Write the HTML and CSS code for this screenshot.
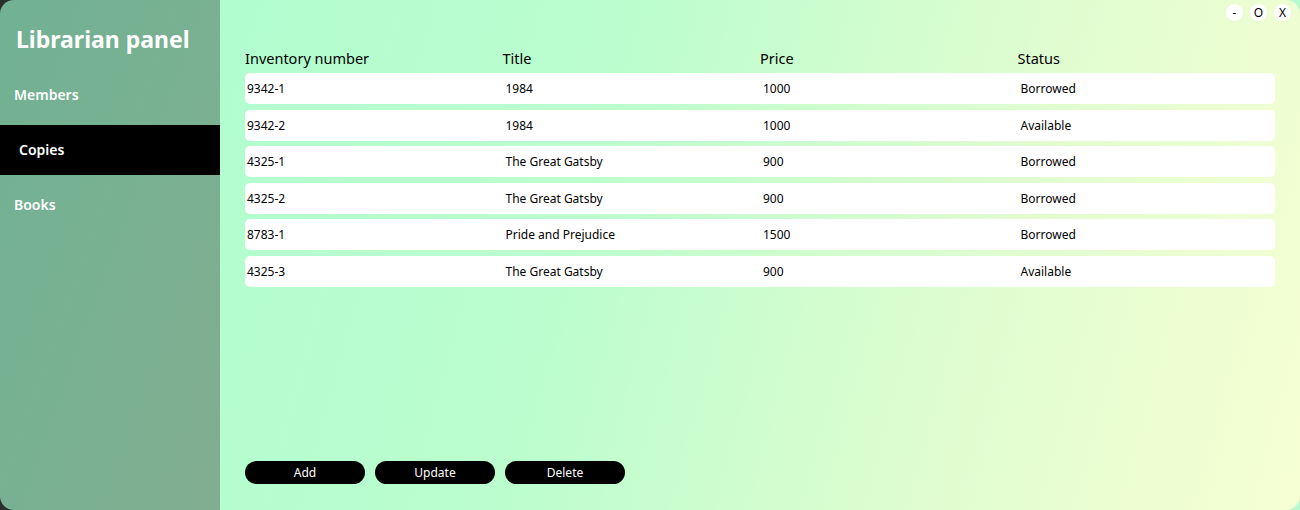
FILE: index.html
```html
<!DOCTYPE html>
<html>
<head>
<meta charset="utf-8">
<link rel="stylesheet" href="styles.css">
</head>
<body>
<div class="window">
  <aside class="sidebar">
    <h1 class="brand">Librarian panel</h1>
    <nav class="nav">
      <div class="nav-item">Members</div>
      <div class="nav-item active">Copies</div>
      <div class="nav-item">Books</div>
    </nav>
  </aside>
  <main class="main">
    <div class="win-controls">
      <span class="wc">-</span>
      <span class="wc">O</span>
      <span class="wc">X</span>
    </div>
    <div class="table">
      <div class="thead">
        <div>Inventory number</div><div>Title</div><div>Price</div><div>Status</div>
      </div>
      <div class="row"><div>9342-1</div><div>1984</div><div>1000</div><div>Borrowed</div></div>
      <div class="row"><div>9342-2</div><div>1984</div><div>1000</div><div>Available</div></div>
      <div class="row"><div>4325-1</div><div>The Great Gatsby</div><div>900</div><div>Borrowed</div></div>
      <div class="row"><div>4325-2</div><div>The Great Gatsby</div><div>900</div><div>Borrowed</div></div>
      <div class="row"><div>8783-1</div><div>Pride and Prejudice</div><div>1500</div><div>Borrowed</div></div>
      <div class="row"><div>4325-3</div><div>The Great Gatsby</div><div>900</div><div>Available</div></div>
    </div>
    <div class="actions">
      <button class="btn">Add</button>
      <button class="btn">Update</button>
      <button class="btn">Delete</button>
    </div>
  </main>
</div>
</body>
</html>
```
FILE: styles.css
```css
html, body {
  margin: 0;
  padding: 0;
  width: 1300px;
  height: 510px;
  overflow: hidden;
  background: linear-gradient(90deg, #2a2f2c 0%, #3d5a48 60%, #b4fccf 100%);
  font-family: "Noto Sans", "Open Sans", sans-serif;
}
.window {
  width: 1300px;
  height: 510px;
  border-radius: 14px;
  overflow: hidden;
  display: flex;
}
.sidebar {
  width: 220px;
  flex: none;
  background: linear-gradient(110deg, #72b193 0%, #78b192 50%, #82ad90 100%);
  color: #fff;
}
.brand {
  margin: 0;
  padding: 21px 0 0 16px;
  height: 49px;
  box-sizing: border-box;
  font-size: 23px;
  font-weight: 700;
  line-height: 36px;
}
.nav {
  margin-top: 21px;
  display: flex;
  flex-direction: column;
  gap: 5px;
}
.nav-item {
  height: 50px;
  display: flex;
  align-items: center;
  padding-left: 14px;
  padding-bottom: 1px;
  box-sizing: border-box;
  font-size: 14px;
  font-weight: 600;
}
.nav-item.active {
  background: #000;
  padding-left: 19px;
}
.main {
  flex: 1;
  position: relative;
  background: linear-gradient(105deg, #b1fdcf 0%, #bcfdce 35%, #e0fdd0 70%, #f6ffd3 100%);
  padding: 47px 25px 26px 25px;
  display: flex;
  flex-direction: column;
  justify-content: space-between;
}
.win-controls {
  position: absolute;
  top: 4px;
  right: 9px;
  display: flex;
  gap: 7px;
}
.wc {
  width: 17px;
  height: 17px;
  border-radius: 50%;
  background: #fff;
  display: flex;
  align-items: center;
  justify-content: center;
  font-size: 12px;
  line-height: 1;
  color: #000;
}
.table {
  display: flex;
  flex-direction: column;
}
.thead, .row {
  display: grid;
  grid-template-columns: repeat(4, 1fr);
}
.thead {
  font-size: 14.5px;
  font-weight: 400;
  height: 22px;
  align-items: center;
  margin-bottom: 4px;
  color: #000;
}
.row {
  background: #fff;
  border-radius: 5px;
  height: 31px;
  align-items: center;
  margin-bottom: 5.6px;
  font-size: 12px;
  color: #000;
}
.row div { padding-left: 2px; }
.row div:not(:first-child) { padding-left: 3px; }
.actions {
  display: flex;
  gap: 10px;
}
.btn {
  width: 120px;
  height: 23px;
  border: none;
  border-radius: 12px;
  background: #000;
  color: #fff;
  font-family: "Noto Sans", "Open Sans", sans-serif;
  font-size: 12px;
  padding: 0;
}
```
